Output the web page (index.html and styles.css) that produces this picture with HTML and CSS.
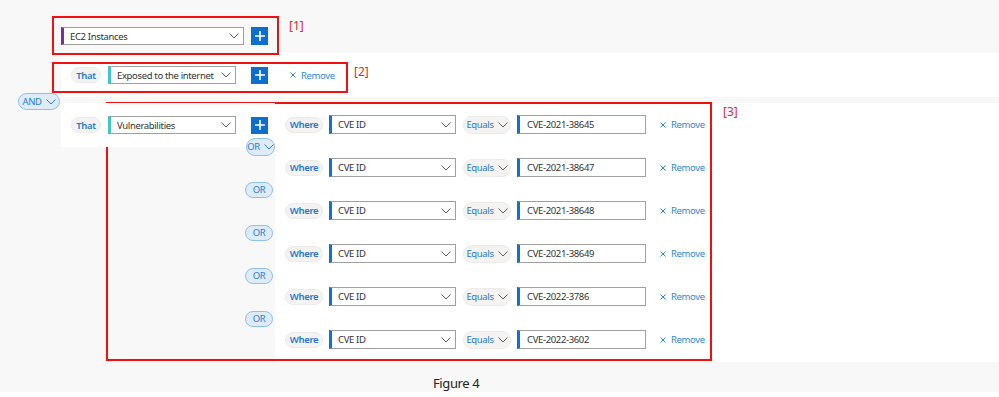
FILE: index.html
```html
<!DOCTYPE html>
<html lang="en">
<head>
<meta charset="utf-8">
<title>Query builder</title>
<link rel="stylesheet" href="styles.css">
</head>
<body>
<div class="canvas">
  <div class="entity-row">
    <div class="select select--purple select--entity"><span class="select__text">EC2 Instances</span><svg class="chev" width="10" height="6" viewBox="0 0 10 6"><path d="M0.5 0.5L5 5L9.5 0.5" fill="none" stroke="#605e5c" stroke-width="1"/></svg></div>
    <span class="add-btn"><svg width="10" height="10" viewBox="0 0 10 10"><path d="M5 0V10M0 5H10" stroke="#fff" stroke-width="1.6"/></svg></span>
  </div>

  <div class="rel-row">
    <span class="pill pill--that">That</span>
    <div class="select select--teal select--rel"><span class="select__text">Exposed to the internet</span><svg class="chev" width="10" height="6" viewBox="0 0 10 6"><path d="M0.5 0.5L5 5L9.5 0.5" fill="none" stroke="#605e5c" stroke-width="1"/></svg></div>
    <span class="add-btn add-btn--rel"><svg width="10" height="10" viewBox="0 0 10 10"><path d="M5 0V10M0 5H10" stroke="#fff" stroke-width="1.6"/></svg></span>
    <span class="remove remove--rel"><svg width="6" height="6" viewBox="0 0 6 6"><path d="M0.5 0.5L5.5 5.5M5.5 0.5L0.5 5.5" stroke="#2b88d8" stroke-width="1"/></svg><span>Remove</span></span>
  </div>

  <div class="group">
    <div class="group__left">
      <div class="group__head">
        <span class="pill pill--that">That</span>
        <div class="select select--teal select--rel"><span class="select__text">Vulnerabilities</span><svg class="chev" width="10" height="6" viewBox="0 0 10 6"><path d="M0.5 0.5L5 5L9.5 0.5" fill="none" stroke="#605e5c" stroke-width="1"/></svg></div>
        <span class="add-btn add-btn--rel"><svg width="10" height="10" viewBox="0 0 10 10"><path d="M5 0V10M0 5H10" stroke="#fff" stroke-width="1.6"/></svg></span>
      </div>
      <div class="connectors">
        <div class="slot"><span class="logic logic--chev">OR<svg width="10" height="6" viewBox="0 0 10 6"><path d="M0.5 0.5L5 5L9.5 0.5" fill="none" stroke="#2b7cd3" stroke-width="1"/></svg></span></div>
        <div class="slot"><span class="logic">OR</span></div>
        <div class="slot"><span class="logic">OR</span></div>
        <div class="slot"><span class="logic">OR</span></div>
        <div class="slot"><span class="logic">OR</span></div>
      </div>
    </div>
    <div class="group__right">
      <div class="cond-row">
        <span class="pill pill--where">Where</span>
        <div class="select select--blue select--field"><span class="select__text">CVE ID</span><svg class="chev" width="10" height="6" viewBox="0 0 10 6"><path d="M0.5 0.5L5 5L9.5 0.5" fill="none" stroke="#605e5c" stroke-width="1"/></svg></div>
        <span class="pill pill--op">Equals<svg width="10" height="6" viewBox="0 0 10 6"><path d="M0.5 0.5L5 5L9.5 0.5" fill="none" stroke="#605e5c" stroke-width="1"/></svg></span>
        <div class="input">CVE-2021-38645</div>
        <span class="remove"><svg width="6" height="6" viewBox="0 0 6 6"><path d="M0.5 0.5L5.5 5.5M5.5 0.5L0.5 5.5" stroke="#2b88d8" stroke-width="1"/></svg><span>Remove</span></span>
      </div>
      <div class="cond-row">
        <span class="pill pill--where">Where</span>
        <div class="select select--blue select--field"><span class="select__text">CVE ID</span><svg class="chev" width="10" height="6" viewBox="0 0 10 6"><path d="M0.5 0.5L5 5L9.5 0.5" fill="none" stroke="#605e5c" stroke-width="1"/></svg></div>
        <span class="pill pill--op">Equals<svg width="10" height="6" viewBox="0 0 10 6"><path d="M0.5 0.5L5 5L9.5 0.5" fill="none" stroke="#605e5c" stroke-width="1"/></svg></span>
        <div class="input">CVE-2021-38647</div>
        <span class="remove"><svg width="6" height="6" viewBox="0 0 6 6"><path d="M0.5 0.5L5.5 5.5M5.5 0.5L0.5 5.5" stroke="#2b88d8" stroke-width="1"/></svg><span>Remove</span></span>
      </div>
      <div class="cond-row">
        <span class="pill pill--where">Where</span>
        <div class="select select--blue select--field"><span class="select__text">CVE ID</span><svg class="chev" width="10" height="6" viewBox="0 0 10 6"><path d="M0.5 0.5L5 5L9.5 0.5" fill="none" stroke="#605e5c" stroke-width="1"/></svg></div>
        <span class="pill pill--op">Equals<svg width="10" height="6" viewBox="0 0 10 6"><path d="M0.5 0.5L5 5L9.5 0.5" fill="none" stroke="#605e5c" stroke-width="1"/></svg></span>
        <div class="input">CVE-2021-38648</div>
        <span class="remove"><svg width="6" height="6" viewBox="0 0 6 6"><path d="M0.5 0.5L5.5 5.5M5.5 0.5L0.5 5.5" stroke="#2b88d8" stroke-width="1"/></svg><span>Remove</span></span>
      </div>
      <div class="cond-row">
        <span class="pill pill--where">Where</span>
        <div class="select select--blue select--field"><span class="select__text">CVE ID</span><svg class="chev" width="10" height="6" viewBox="0 0 10 6"><path d="M0.5 0.5L5 5L9.5 0.5" fill="none" stroke="#605e5c" stroke-width="1"/></svg></div>
        <span class="pill pill--op">Equals<svg width="10" height="6" viewBox="0 0 10 6"><path d="M0.5 0.5L5 5L9.5 0.5" fill="none" stroke="#605e5c" stroke-width="1"/></svg></span>
        <div class="input">CVE-2021-38649</div>
        <span class="remove"><svg width="6" height="6" viewBox="0 0 6 6"><path d="M0.5 0.5L5.5 5.5M5.5 0.5L0.5 5.5" stroke="#2b88d8" stroke-width="1"/></svg><span>Remove</span></span>
      </div>
      <div class="cond-row">
        <span class="pill pill--where">Where</span>
        <div class="select select--blue select--field"><span class="select__text">CVE ID</span><svg class="chev" width="10" height="6" viewBox="0 0 10 6"><path d="M0.5 0.5L5 5L9.5 0.5" fill="none" stroke="#605e5c" stroke-width="1"/></svg></div>
        <span class="pill pill--op">Equals<svg width="10" height="6" viewBox="0 0 10 6"><path d="M0.5 0.5L5 5L9.5 0.5" fill="none" stroke="#605e5c" stroke-width="1"/></svg></span>
        <div class="input">CVE-2022-3786</div>
        <span class="remove"><svg width="6" height="6" viewBox="0 0 6 6"><path d="M0.5 0.5L5.5 5.5M5.5 0.5L0.5 5.5" stroke="#2b88d8" stroke-width="1"/></svg><span>Remove</span></span>
      </div>
      <div class="cond-row">
        <span class="pill pill--where">Where</span>
        <div class="select select--blue select--field"><span class="select__text">CVE ID</span><svg class="chev" width="10" height="6" viewBox="0 0 10 6"><path d="M0.5 0.5L5 5L9.5 0.5" fill="none" stroke="#605e5c" stroke-width="1"/></svg></div>
        <span class="pill pill--op">Equals<svg width="10" height="6" viewBox="0 0 10 6"><path d="M0.5 0.5L5 5L9.5 0.5" fill="none" stroke="#605e5c" stroke-width="1"/></svg></span>
        <div class="input">CVE-2022-3602</div>
        <span class="remove"><svg width="6" height="6" viewBox="0 0 6 6"><path d="M0.5 0.5L5.5 5.5M5.5 0.5L0.5 5.5" stroke="#2b88d8" stroke-width="1"/></svg><span>Remove</span></span>
      </div>
    </div>
  </div>

  <div class="caption">Figure 4</div>

  <span class="logic logic--and">AND<svg width="10" height="6" viewBox="0 0 10 6"><path d="M0.5 0.5L5 5L9.5 0.5" fill="none" stroke="#2b7cd3" stroke-width="1"/></svg></span>

  <div class="annot annot--1"></div>
  <div class="annot annot--2"></div>
  <div class="annot annot--3"></div>
  <span class="annot-label annot-label--1">[1]</span>
  <span class="annot-label annot-label--2">[2]</span>
  <span class="annot-label annot-label--3">[3]</span>
</div>
</body>
</html>
```

FILE: styles.css
```css
* { box-sizing: border-box; }

html, body {
  margin: 0;
  padding: 0;
  background: #ffffff;
}

body {
  font-family: "Noto Sans", "DejaVu Sans", sans-serif;
  font-size: 9.5px;
  letter-spacing: -0.35px;
  color: #323130;
}

.canvas {
  position: relative;
  width: 999px;
  height: 392px;
  background: #f8f8f8;
}

/* ---------- row 1 ---------- */
.entity-row {
  height: 53px;
  padding: 27px 0 0 61px;
  display: flex;
  align-items: flex-start;
  gap: 7px;
}

/* ---------- selects ---------- */
.select {
  display: flex;
  align-items: center;
  justify-content: space-between;
  height: 18px;
  background: #ffffff;
  border: 1px solid #a19f9d;
  border-left-width: 3px;
  padding: 0 4px 0 6px;
}
.select--purple { border-left-color: #7b2d9e; }
.select--teal { border-left-color: #3cc8c8; }
.select--blue { border-left-color: #0f72d2; }

.select--entity { width: 183px; }
.select--rel { width: 128px; }
.select--field { width: 127px; height: 19px; }

.select__text { white-space: nowrap; }
.chev { flex: none; }

/* ---------- add button ---------- */
.add-btn {
  display: flex;
  align-items: center;
  justify-content: center;
  width: 17px;
  height: 18px;
  background: #0c6fd0;
}
.add-btn--rel { margin-left: 15px; height: 17px; }

/* ---------- pills ---------- */
.pill {
  display: inline-flex;
  align-items: center;
  justify-content: center;
  height: 16px;
  border-radius: 8px;
  background: #f4f3f2;
  border: 1px solid #ecebea;
  color: #1f78d1;
  font-weight: 600;
  white-space: nowrap;
}
.pill--that { width: 30px; margin-right: 7px; }
.pill--where { width: 38px; }
.pill--op {
  width: 48px;
  height: 18px;
  border-radius: 9px;
  font-weight: normal;
  gap: 4px;
}

/* ---------- remove ---------- */
.remove {
  display: inline-flex;
  align-items: center;
  gap: 5px;
  color: #2b88d8;
  white-space: nowrap;
}
.remove--rel { margin-left: 22px; }

/* ---------- row 2 ---------- */
.rel-row {
  margin-left: 61px;
  height: 44px;
  margin-bottom: 6px;
  background: #ffffff;
  display: flex;
  align-items: center;
  padding-left: 10px;
}

/* ---------- group (row 3) ---------- */
.group {
  margin-left: 61px;
  height: 259px;
  display: flex;
}
.group__left {
  width: 214px;
  flex: none;
  position: relative;
  z-index: 1;
}
.group__head {
  height: 44px;
  background: #ffffff;
  display: flex;
  align-items: center;
  padding-left: 10px;
}
.connectors {
  margin-top: -22px;
  padding-left: 184px;
}
.slot {
  height: 43px;
  display: flex;
  align-items: center;
}

.logic {
  display: inline-flex;
  align-items: center;
  justify-content: center;
  gap: 4px;
  width: 28px;
  height: 16px;
  border-radius: 8px;
  background: #deecf9;
  border: 1px solid #8cc0ef;
  color: #2b7cd3;
  white-space: nowrap;
}
.logic--chev { width: 36px; height: 18px; border-radius: 9px; margin-left: 1px; }
.logic--and {
  position: absolute;
  left: 18px;
  top: 93px;
  width: 42px;
  height: 17px;
  border-radius: 9px;
}

.group__right {
  flex: 1;
  background: #ffffff;
  padding-left: 10px;
}
.cond-row {
  height: 43px;
  display: flex;
  align-items: center;
  gap: 6px;
}
.cond-row .select--field { margin-right: 1px; }
.input {
  width: 129px;
  height: 19px;
  background: #ffffff;
  border: 1px solid #a19f9d;
  border-left: 3px solid #0f72d2;
  padding-left: 7px;
  display: flex;
  align-items: center;
  margin-right: 8px;
}

/* ---------- caption ---------- */
.caption {
  height: 30px;
  padding: 13px 0 0 433px;
  font-size: 13px;
  letter-spacing: -0.4px;
  color: #222222;
  line-height: 16px;
}

/* ---------- annotations ---------- */
.annot {
  position: absolute;
  border: 2px solid #f20f0f;
}
.annot--1 { left: 52px; top: 16px; width: 227px; height: 39px; }
.annot--2 { left: 52px; top: 62px; width: 296px; height: 31px; }
.annot--3 { left: 106px; top: 102px; width: 606px; height: 259px; }

.annot-label {
  position: absolute;
  color: #e8262a;
  font-size: 12px;
  letter-spacing: 0;
  line-height: 14px;
}
.annot-label--1 { left: 289px; top: 19px; }
.annot-label--2 { left: 354px; top: 65px; }
.annot-label--3 { left: 723px; top: 105px; }
```
